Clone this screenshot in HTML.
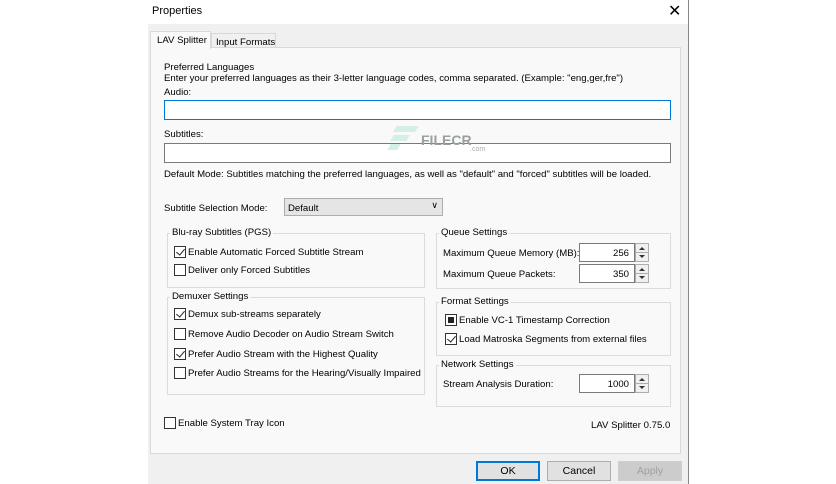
<!DOCTYPE html>
<html><head><style>
*{margin:0;padding:0;box-sizing:border-box}
body{width:836px;height:484px;background:#fff;font-family:"Liberation Sans",sans-serif;font-size:9.6px;color:#000;position:relative;overflow:hidden}
.a{position:absolute;white-space:nowrap}
.t{margin-top:1px}
.dlg{position:absolute;left:148px;top:0;width:541px;height:484px;background:#f0f0f0;border-right:1px solid #888}
.tb{position:absolute;left:148px;top:0;width:540px;height:24px;background:#fff}
.page{position:absolute;left:150px;top:47px;width:531px;height:407px;border:1px solid #d9d9d9;background:#f9f9f9}
.inp{position:absolute;background:#fff;border:1px solid #7a7a7a}
.grp{position:absolute;border:1px solid #dcdcdc}
.lg{position:absolute;background:#f9f9f9;padding:0 2px;top:-7px;left:4px}
.cb{position:absolute;width:12px;height:12px;border:1px solid #333;background:#fff}
.cb.c::after{content:"";position:absolute;left:3px;top:0px;width:4px;height:7px;border:solid #222;border-width:0 1.5px 1.5px 0;transform:rotate(40deg)}
.cb.f::after{content:"";position:absolute;left:2px;top:2px;width:6px;height:6px;background:#222}
.spin{position:absolute;width:56px;height:19px;background:#fff;border:1px solid #7a7a7a;text-align:right;padding:4px 5px 0 0}
.sb{position:absolute;width:14px;height:19px;border:1px solid #adadad;background:#f0f0f0}
.sb::before{content:"";position:absolute;left:3px;top:3px;border:3px solid transparent;border-bottom:3px solid #333;border-top:0}
.sb::after{content:"";position:absolute;left:3px;top:11px;border:3px solid transparent;border-top:3px solid #333;border-bottom:0}
.sb i{position:absolute;left:0;right:0;top:8px;border-top:1px solid #adadad}
.btn{position:absolute;top:461px;width:64px;height:20px;border:1px solid #adadad;background:#e1e1e1;text-align:center;padding-top:3px;font-size:10.5px}
</style></head><body>
<div class="dlg"></div>
<div class="tb"></div>
<div class="a" style="left:152px;top:5px;font-size:11px">Properties</div>
<div class="a" style="left:668px;top:1px;font-size:16px">✕</div>
<div class="a" style="left:211px;top:33px;width:65px;height:15px;border:1px solid #d9d9d9;border-bottom:none;background:#f0f0f0;padding:3px 0 0 4px">Input Formats</div>
<div class="page"></div>
<div class="a" style="left:150px;top:31px;width:61px;height:18px;border:1px solid #d9d9d9;border-bottom:none;background:#f9f9f9;padding:3px 0 0 6px">LAV Splitter</div>
<div class="a t" style="left:164px;top:61px">Preferred Languages</div>
<div class="a t" style="left:164px;top:72px">Enter your preferred languages as their 3-letter language codes, comma separated. (Example: "eng,ger,fre")</div>
<div class="a t" style="left:164px;top:86px">Audio:</div>
<div class="inp" style="left:164px;top:100px;width:507px;height:20px;border-color:#0078d7"></div>
<div class="a t" style="left:164px;top:128px">Subtitles:</div>
<div class="inp" style="left:164px;top:143px;width:507px;height:20px"></div>
<div class="a" style="left:395px;top:126px;width:22px;height:6px;background:#d4efe8;transform:skewX(-30deg)"></div>
<div class="a" style="left:392px;top:135px;width:16px;height:6px;background:#d4efe8;transform:skewX(-30deg)"></div>
<div class="a" style="left:389px;top:144px;width:10px;height:6px;background:#d4efe8;transform:skewX(-30deg)"></div>
<div class="a" style="left:421px;top:132px;font-size:14px;font-weight:bold;color:#9aa0a0">FILECR</div>
<div class="a" style="left:470px;top:146px;font-size:7px;color:#aaa">.com</div>
<div class="a t" style="left:164px;top:168px">Default Mode: Subtitles matching the preferred languages, as well as "default" and "forced" subtitles will be loaded.</div>
<div class="a t" style="left:164px;top:202px">Subtitle Selection Mode:</div>
<div class="a" style="left:284px;top:198px;width:159px;height:18px;border:1px solid #adadad;background:#e5e5e5;padding:4px 0 0 3px">Default<span style="position:absolute;right:4px;top:1px;font-size:9px">&#x2228;</span></div>

<div class="grp" style="left:167px;top:233px;width:258px;height:55px"><span class="lg" style="left:2px">Blu-ray Subtitles (PGS)</span></div>
<div class="cb c" style="left:174px;top:246px"></div><div class="a t" style="left:188px;top:246px">Enable Automatic Forced Subtitle Stream</div>
<div class="cb" style="left:174px;top:264px"></div><div class="a t" style="left:188px;top:264px">Deliver only Forced Subtitles</div>

<div class="grp" style="left:167px;top:297px;width:258px;height:98px"><span class="lg" style="left:2px">Demuxer Settings</span></div>
<div class="cb c" style="left:174px;top:308px"></div><div class="a t" style="left:188px;top:308px">Demux sub-streams separately</div>
<div class="cb" style="left:174px;top:328px"></div><div class="a t" style="left:188px;top:328px">Remove Audio Decoder on Audio Stream Switch</div>
<div class="cb c" style="left:174px;top:348px"></div><div class="a t" style="left:188px;top:348px">Prefer Audio Stream with the Highest Quality</div>
<div class="cb" style="left:174px;top:367px"></div><div class="a t" style="left:188px;top:367px">Prefer Audio Streams for the Hearing/Visually Impaired</div>

<div class="grp" style="left:436px;top:233px;width:235px;height:56px"><span class="lg" style="left:2px">Queue Settings</span></div>
<div class="a t" style="left:443px;top:247px">Maximum Queue Memory (MB):</div>
<div class="spin" style="left:579px;top:243px">256</div><div class="sb" style="left:635px;top:243px"><i></i></div>
<div class="a t" style="left:443px;top:268px">Maximum Queue Packets:</div>
<div class="spin" style="left:579px;top:264px">350</div><div class="sb" style="left:635px;top:264px"><i></i></div>

<div class="grp" style="left:436px;top:302px;width:235px;height:54px"><span class="lg" style="left:2px">Format Settings</span></div>
<div class="cb f" style="left:445px;top:314px"></div><div class="a t" style="left:459px;top:314px">Enable VC-1 Timestamp Correction</div>
<div class="cb c" style="left:445px;top:333px"></div><div class="a t" style="left:459px;top:333px">Load Matroska Segments from external files</div>

<div class="grp" style="left:436px;top:365px;width:235px;height:42px"><span class="lg" style="left:2px">Network Settings</span></div>
<div class="a t" style="left:443px;top:378px">Stream Analysis Duration:</div>
<div class="spin" style="left:579px;top:374px">1000</div><div class="sb" style="left:635px;top:374px"><i></i></div>

<div class="cb" style="left:164px;top:417px"></div><div class="a t" style="left:178px;top:417px">Enable System Tray Icon</div>
<div class="a t" style="left:591px;top:419px">LAV Splitter 0.75.0</div>

<div class="btn" style="left:476px;border:2px solid #0078d7;padding-top:2px">OK</div>
<div class="btn" style="left:547px">Cancel</div>
<div class="btn" style="left:618px;color:#a0a0a0;border-color:#cfcfcf;background:#ccc">Apply</div>
</body></html>
